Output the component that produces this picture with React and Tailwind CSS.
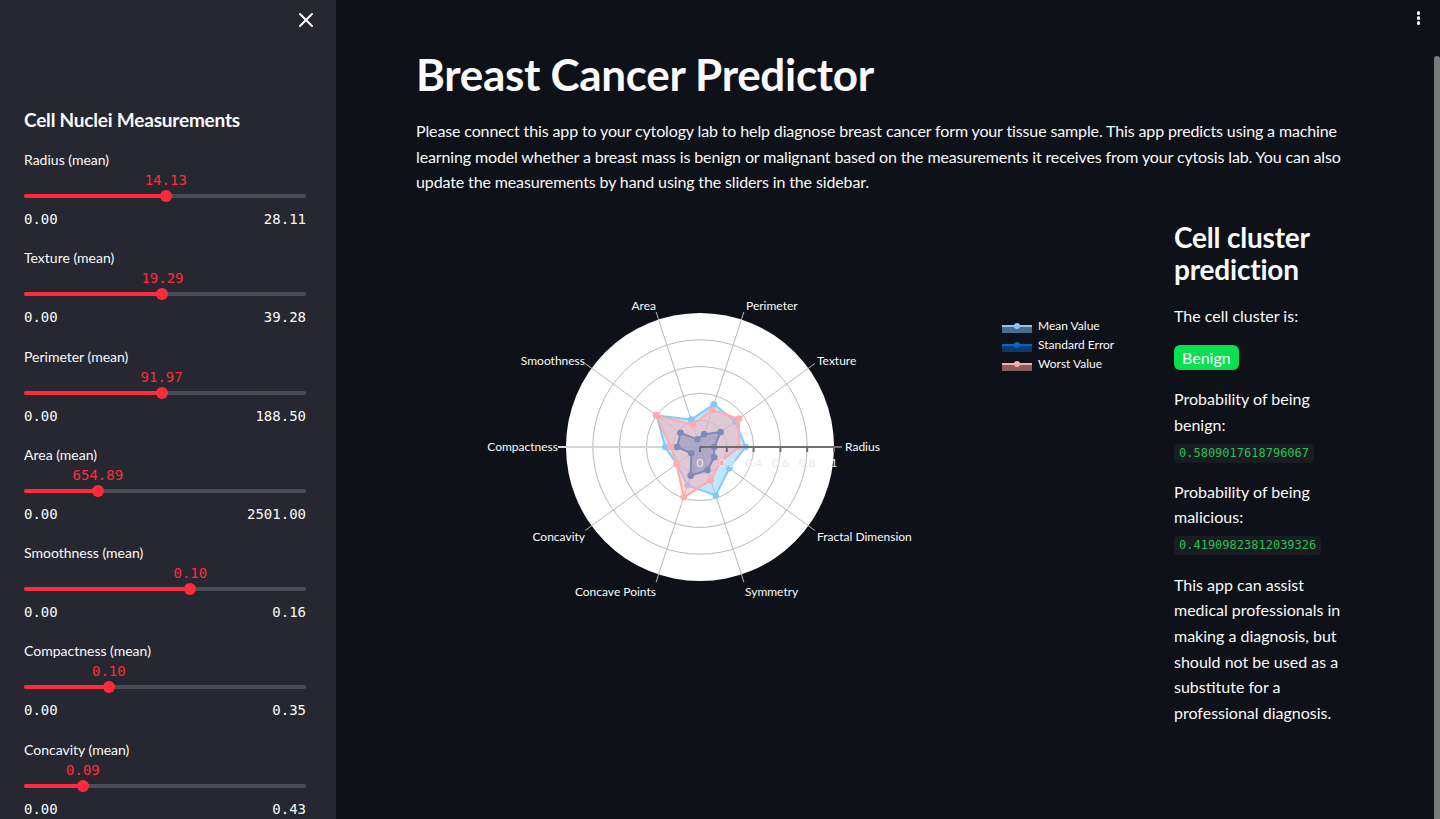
import React from "react";
import { X } from "lucide-react";

const sliders = [
  { label: "Radius (mean)", value: "14.13", max: "28.11", frac: 0.5027 },
  { label: "Texture (mean)", value: "19.29", max: "39.28", frac: 0.491 },
  { label: "Perimeter (mean)", value: "91.97", max: "188.50", frac: 0.488 },
  { label: "Area (mean)", value: "654.89", max: "2501.00", frac: 0.2618 },
  { label: "Smoothness (mean)", value: "0.10", max: "0.16", frac: 0.59 },
  { label: "Compactness (mean)", value: "0.10", max: "0.35", frac: 0.301 },
  { label: "Concavity (mean)", value: "0.09", max: "0.43", frac: 0.209 },
];

const Slider = ({ label, value, max, frac }) => {
  const pos = `${frac * 100}%`;
  return (
    <div className="mb-[19.3px]">
      <div className="h-5 text-sm leading-5 text-[#fafafa]">{label}</div>
      <div className="relative h-5">
        <span
          className="absolute top-0 -translate-x-1/2 font-['DejaVu_Sans_Mono',monospace] text-sm leading-5 text-[#ff2b3c]"
          style={{ left: pos }}
        >
          {value}
        </span>
      </div>
      <div className="relative h-3">
        <div className="absolute inset-x-0 top-1 h-1 rounded-full bg-[#4b4c56]" />
        <div className="absolute left-0 top-1 h-1 rounded-full bg-[#ff2b3c]" style={{ width: pos }} />
        <div
          className="absolute top-0 h-3 w-3 -translate-x-1/2 rounded-full bg-[#ff2b3c]"
          style={{ left: pos }}
        />
      </div>
      <div className="mt-[7px] flex justify-between font-['DejaVu_Sans_Mono',monospace] text-sm leading-5 text-[#fafafa]">
        <span>0.00</span>
        <span>{max}</span>
      </div>
    </div>
  );
};

// radar chart geometry (svg coords)
const CX = 284;
const CY = 236;
const R = 134;
const cats = [
  "Radius",
  "Texture",
  "Perimeter",
  "Area",
  "Smoothness",
  "Compactness",
  "Concavity",
  "Concave Points",
  "Symmetry",
  "Fractal Dimension",
];
const traces = [
  {
    name: "Mean Value",
    color: "#83c9ff",
    fill: "rgba(131,201,255,0.5)",
    vals: [0.34, 0.325, 0.335, 0.215, 0.4, 0.26, 0.215, 0.3, 0.38, 0.27],
  },
  {
    name: "Standard Error",
    color: "#0068c9",
    fill: "rgba(0,104,201,0.5)",
    vals: [0.106, 0.19, 0.1, 0.06, 0.18, 0.17, 0.08, 0.225, 0.18, 0.13],
  },
  {
    name: "Worst Value",
    color: "#ffabab",
    fill: "rgba(255,171,171,0.5)",
    vals: [0.29, 0.36, 0.29, 0.175, 0.405, 0.217, 0.215, 0.395, 0.26, 0.19],
  },
];

const pt = (v, i) => {
  const a = (i * 36 * Math.PI) / 180;
  return [CX + v * R * Math.cos(a), CY - v * R * Math.sin(a)];
};

const labels = [
  { t: "Radius", x: 429, y: 236, a: "start" },
  { t: "Texture", x: 401, y: 150, a: "start" },
  { t: "Perimeter", x: 330, y: 95, a: "start" },
  { t: "Area", x: 240, y: 95, a: "end" },
  { t: "Smoothness", x: 169, y: 150, a: "end" },
  { t: "Compactness", x: 142, y: 236, a: "end" },
  { t: "Concavity", x: 169, y: 326, a: "end" },
  { t: "Concave Points", x: 240, y: 381, a: "end" },
  { t: "Symmetry", x: 329, y: 381, a: "start" },
  { t: "Fractal Dimension", x: 401, y: 326, a: "start" },
];

const Radar = () => (
  <svg width="742" height="450" viewBox="0 0 742 450" className="block">
    <circle cx={CX} cy={CY} r={R} fill="#ffffff" />
    {[0.2, 0.4, 0.6, 0.8].map((f) => (
      <circle key={f} cx={CX} cy={CY} r={R * f} fill="none" stroke="#b9b9b9" strokeWidth="1" />
    ))}
    {cats.map((c, i) => {
      if (i === 0 || i === 5) return null;
      const [x, y] = pt(1.06, i);
      return <line key={c} x1={CX} y1={CY} x2={x} y2={y} stroke="#b9b9b9" strokeWidth="1" />;
    })}
    <line x1={CX - R - 8} y1={CY} x2={CX} y2={CY} stroke="#d6d6d6" strokeWidth="2" />
    {traces.map((tr) => {
      const pts = tr.vals.map((v, i) => pt(v, i));
      const d = pts.map((p) => p.join(",")).join(" ");
      return (
        <g key={tr.name}>
          <polygon points={d} fill={tr.fill} stroke={tr.color} strokeWidth="2" strokeLinejoin="round" />
          {pts.map((p, i) => (
            <circle key={i} cx={p[0]} cy={p[1]} r="3.3" fill={tr.color} />
          ))}
        </g>
      );
    })}
    <line x1={CX} y1={CY} x2={CX + R + 8} y2={CY} stroke="#6e6e6e" strokeWidth="2" />
    {[0, 0.2, 0.4, 0.6, 0.8, 1].map((f, i) => (
      <g key={f}>
        <line x1={CX + R * f} y1={CY} x2={CX + R * f} y2={CY + 5} stroke="#6e6e6e" strokeWidth="2" />
        <text
          x={CX + R * f}
          y={CY + 20}
          textAnchor="middle"
          fontSize="12"
          fill="#e6eaf1"
          className="font-[Lato,sans-serif]"
        >
          {["0", "0.2", "0.4", "0.6", "0.8", "1"][i]}
        </text>
      </g>
    ))}
    {labels.map((l) => (
      <text
        key={l.t}
        x={l.x}
        y={l.y + 4}
        textAnchor={l.a}
        fontSize="12"
        fill="#fafafa"
        className="font-[Lato,sans-serif]"
      >
        {l.t}
      </text>
    ))}
    {traces.map((tr, i) => (
      <g key={tr.name} transform={`translate(586, ${116 + i * 19})`}>
        <rect x="0" y="-1" width="30" height="7" fill={tr.fill} />
        <line x1="0" y1="-1" x2="30" y2="-1" stroke={tr.color} strokeWidth="2" />
        <circle cx="15" cy="-1" r="3" fill={tr.color} />
        <text x="36" y="3" fontSize="12" fill="#fafafa" className="font-[Lato,sans-serif]">
          {tr.name}
        </text>
      </g>
    ))}
  </svg>
);

const Code = ({ children }) => (
  <span className="inline-block rounded-[4px] bg-[#1a1c23] px-[5px] py-[2px] font-['DejaVu_Sans_Mono',monospace] text-[12px] leading-[15px] text-[#21c354]">
    {children}
  </span>
);

export default function App() {
  return (
    <div className="relative flex h-[819px] w-full overflow-hidden bg-[#0e1117] font-[Lato,sans-serif] text-[#fafafa]">
      <aside className="w-[336px] shrink-0 overflow-hidden bg-[#262730]">
        <div className="flex h-10 items-center justify-end pr-[18px]">
          <X size={24} strokeWidth={2} className="text-[#fafafa]" />
        </div>
        <div className="pl-6 pr-[30px]">
          <h2 className="mt-[66px] mb-4 text-[19px] font-bold leading-7 tracking-[-0.2px]">
            Cell Nuclei Measurements
          </h2>
          {sliders.map((s) => (
            <Slider key={s.label} {...s} />
          ))}
        </div>
      </aside>

      <main className="min-w-0 flex-1 pl-20 pt-[48px]">
        <div className="w-[944px]">
          <h1 className="text-[44px] font-bold leading-[53px] tracking-[-0.3px]">Breast Cancer Predictor</h1>
          <p className="mt-[17px] text-base leading-[25.6px] tracking-[-0.13px]">
            Please connect this app to your cytology lab to help diagnose breast cancer form your tissue sample. This
            app predicts using a machine learning model whether a breast mass is benign or malignant based on the
            measurements it receives from your cytosis lab. You can also update the measurements by hand using the
            sliders in the sidebar.
          </p>
          <div className="mt-[16px] grid grid-cols-[742px_186px] gap-4">
            <Radar />
            <div className="pt-[10px]">
              <h2 className="text-[28px] font-bold leading-8 tracking-[-0.2px]">Cell cluster prediction</h2>
              <p className="mt-[18px] text-base leading-[25.6px]">The cell cluster is:</p>
              <div className="mt-[17px] flex">
                <span className="rounded-[6px] bg-[#09e04f] px-2 text-base leading-[25px] text-white">Benign</span>
              </div>
              <p className="mt-4 text-base leading-[25.6px]">Probability of being benign:</p>
              <div className="mt-[6px] flex">
                <Code>0.5809017618796067</Code>
              </div>
              <p className="mt-4 text-base leading-[25.6px]">Probability of being malicious:</p>
              <div className="mt-[6px] flex">
                <Code>0.41909823812039326</Code>
              </div>
              <p className="mt-[17px] text-base leading-[25.6px]">
                This app can assist medical professionals in making a diagnosis, but should not be used as a
                substitute for a professional diagnosis.
              </p>
            </div>
          </div>
        </div>
      </main>

      <div className="absolute right-[20px] top-[11px] flex flex-col gap-[1.5px]">
        <span className="h-[3.5px] w-[3.5px] rounded-full bg-[#fafafa]" />
        <span className="h-[3.5px] w-[3.5px] rounded-full bg-[#fafafa]" />
        <span className="h-[3.5px] w-[3.5px] rounded-full bg-[#fafafa]" />
      </div>
      <div className="absolute bottom-0 right-0 top-[56px] w-[6px] rounded-t-[3px] bg-[#7b7b7b]" />
    </div>
  );
}
